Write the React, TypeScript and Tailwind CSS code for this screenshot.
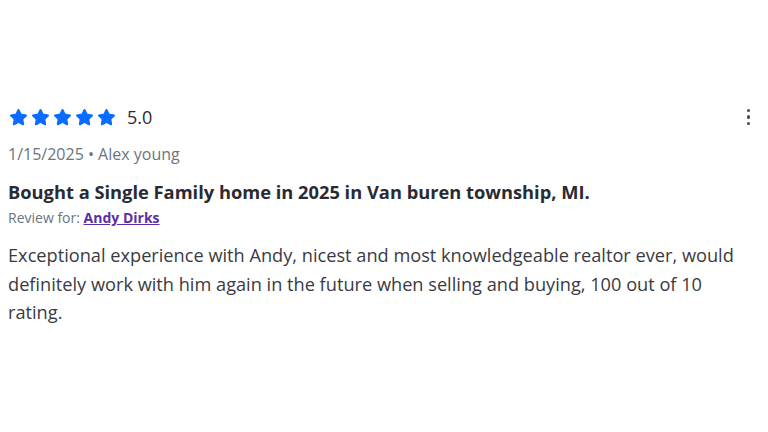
import { Star } from "lucide-react";

export default function App() {
    return (
        <div className="w-[768px] h-[432px] bg-white px-2 pt-[104px]" style={{ fontFamily: '"Open Sans", sans-serif' }}>
            <div className="flex items-center justify-between h-[26px]">
                <div className="flex items-center">
                    <div className="flex items-center gap-[3px] pl-[1px]">
                        {[0, 1, 2, 3, 4].map((i) => (
                            <Star key={i} size={19} className="text-[#0a6cff] fill-[#0a6cff]" strokeWidth={1.5} />
                        ))}
                    </div>
                    <span className="ml-[11px] text-[18px] text-[#2a2a33]">5.0</span>
                </div>
                <div className="flex flex-col items-center gap-[3px] pr-[10px]">
                    <span className="w-[3.5px] h-[3.5px] rounded-full bg-[#4a4a55]" />
                    <span className="w-[3.5px] h-[3.5px] rounded-full bg-[#4a4a55]" />
                    <span className="w-[3.5px] h-[3.5px] rounded-full bg-[#4a4a55]" />
                </div>
            </div>
            <p className="mt-[12px] text-[16px] leading-[24px] text-[#6b7480]">1/15/2025 • Alex young</p>
            <h3 className="mt-[13px] text-[18.3px] leading-[26px] font-bold text-[#2a2a33]">
                Bought a Single Family home in 2025 in Van buren township, MI.
            </h3>
            <p className="mt-[3px] text-[14px] leading-[20px] text-[#6b7480]">
                Review for:{" "}
                <a href="#" className="font-bold text-[#5b2ea6] underline">
                    Andy Dirks
                </a>
            </p>
            <p className="mt-[13px] text-[18.2px] leading-[28.5px] text-[#3a3a42] pr-[20px]">
                Exceptional experience with Andy, nicest and most knowledgeable realtor ever, would definitely work with him
                again in the future when selling and buying, 100 out of 10 rating.
            </p>
        </div>
    );
}
